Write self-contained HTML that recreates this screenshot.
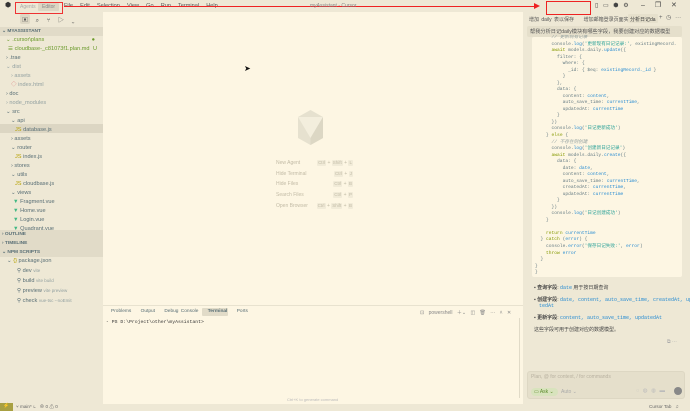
<!DOCTYPE html>
<html><head><meta charset="utf-8">
<style>
*{margin:0;padding:0;box-sizing:border-box}
body{width:690px;height:411px;overflow:hidden;background:#eee8d5;font-family:"Liberation Sans","Noto Sans CJK SC",sans-serif;color:#586e75;position:relative}
.a{position:absolute;white-space:nowrap}
.sb{font-size:5.6px;line-height:9px}
.code{font-family:"Liberation Mono","Noto Sans CJK SC",monospace;font-size:4.6px;line-height:6.53px;color:#657b83;white-space:pre}
.k{color:#859900}.s{color:#2aa198}.f{color:#268bd2}.c{color:#93a1a1;font-style:italic}
.key{display:inline-block;background:#f1ebd8;border-radius:1px;padding:0 1px;font-size:4.5px;line-height:6px}
</style></head><body>
<!-- title bar -->
<div class="a" style="left:0;top:0;width:690px;height:12px;background:#eee8d5"></div>
<div class="a" style="left:5px;top:2px;font-size:7px;line-height:8px;color:#333">⬢</div>
<div class="a" style="left:15px;top:2px;width:48px;height:12px;border:1px solid #e33"></div>
<div class="a" style="left:20px;top:4px;font-size:5px;color:#aaa">Agents</div>
<div class="a" style="left:38px;top:3px;width:21px;height:8px;background:#dcd6c3;border-radius:1px"></div>
<div class="a" style="left:42px;top:4px;font-size:5px;color:#888">Editor</div>
<div class="a" style="left:64px;top:3px;font-size:5.6px;color:#555;word-spacing:2px">File&nbsp; Edit&nbsp; Selection&nbsp; View&nbsp; Go&nbsp; Run&nbsp; Terminal&nbsp; Help</div>
<div class="a" style="left:64px;top:6px;width:472px;height:1px;background:#e22"></div>
<div class="a" style="left:534px;top:3px;border-left:6px solid #e22;border-top:3px solid transparent;border-bottom:3px solid transparent"></div>
<div class="a" style="left:546px;top:1px;width:45px;height:14px;border:1px solid #e22"></div>
<div class="a" style="left:310px;top:3px;font-size:5px;color:#888">myAssistant - Cursor</div>
<div class="a" style="left:595px;top:2px;font-size:6px;color:#444;word-spacing:3px">▯ ▭ ⬢ ⚙</div>
<div class="a" style="left:641px;top:1px;font-size:7px;color:#444;word-spacing:8px">– ❐ ✕</div>
<!-- sidebar -->
<div class="a" style="left:20px;top:14px;width:10px;height:10px;background:#ddd7c4;border-radius:2px"></div>
<div class="a" style="left:22px;top:15px;font-size:6px;color:#555;word-spacing:6px">▣ ⌕ ⑂ ▷ ⌄</div>
<div class="a" style="left:0;top:27px;width:103px;height:9px;background:#e1dbc8"></div>
<div class="a sb" style="left:2px;top:27px;font-weight:bold;font-size:4.8px">⌄ MYASSISTANT</div>
<div class="a" style="left:0;top:124px;width:103px;height:9px;background:#dcd6c3"></div>
<div class="a" style="left:0;top:230px;width:103px;height:27px;background:#e1dbc8"></div>
<div class="a sb" style="left:0;top:36px;width:103px">
<div style="padding-left:6px;color:#6a9a2a">⌄ .cursor\plans<span style="float:right;padding-right:8px">●</span></div>
<div style="padding-left:8px;color:#6a9a2a">☰ cloudbase-_c81073f1.plan.md<span style="float:right;padding-right:6px">U</span></div>
<div style="padding-left:6px">› .trae</div>
<div style="padding-left:6px;color:#93a1a1">⌄ dist</div>
<div style="padding-left:11px;color:#93a1a1">› assets</div>
<div style="padding-left:11px;color:#93a1a1"><span style="color:#d88">◇</span> index.html</div>
<div style="padding-left:6px">› doc</div>
<div style="padding-left:6px;color:#93a1a1">› node_modules</div>
<div style="padding-left:6px">⌄ src</div>
<div style="padding-left:11px">⌄ api</div>
<div style="padding-left:15px"><span style="color:#b5a000">JS</span> database.js</div>
<div style="padding-left:11px">› assets</div>
<div style="padding-left:11px">⌄ router</div>
<div style="padding-left:15px"><span style="color:#b5a000">JS</span> index.js</div>
<div style="padding-left:11px">› stores</div>
<div style="padding-left:11px">⌄ utils</div>
<div style="padding-left:15px"><span style="color:#b5a000">JS</span> cloudbase.js</div>
<div style="padding-left:11px">⌄ views</div>
<div style="padding-left:13px"><span style="color:#41b883">▼</span> Fragment.vue</div>
<div style="padding-left:13px"><span style="color:#41b883">▼</span> Home.vue</div>
<div style="padding-left:13px"><span style="color:#41b883">▼</span> Login.vue</div>
<div style="padding-left:13px"><span style="color:#41b883">▼</span> Quadrant.vue</div>
</div>
<div class="a sb" style="left:2px;top:230px;font-weight:bold;font-size:4.8px;line-height:9px">› OUTLINE<br>› TIMELINE<br>⌄ NPM SCRIPTS</div>
<div class="a sb" style="left:0;top:257px">
<div style="padding-left:7px">⌄ <span style="color:#b5a000">{}</span> package.json</div>
<div style="padding-left:17px">⚲ dev <span style="font-size:4.5px;color:#93a1a1">vite</span></div>
<div style="padding-left:17px">⚲ build <span style="font-size:4.5px;color:#93a1a1">vite build</span></div>
<div style="padding-left:17px">⚲ preview <span style="font-size:4.5px;color:#93a1a1">vite preview</span></div>
<div style="padding-left:17px">⚲ check <span style="font-size:4.5px;color:#93a1a1">vue-tsc --noEmit</span></div>
</div>
<!-- editor -->
<div class="a" style="left:103px;top:12px;width:420px;height:392px;background:#fdf6e3"></div>
<svg class="a" style="left:297px;top:109px" width="27" height="37" viewBox="0 0 27 37"><polygon points="13.5,1 26,8 26,29 13.5,36 1,29 1,8" fill="#e6e1cf"/><polygon points="1,8 26,8 13.5,29" fill="#f3eedd"/><polygon points="26,8 13.5,29 13.5,36 26,29" fill="#dcd7c4"/></svg>
<div class="a" style="left:276px;top:158px;font-size:5px;line-height:10.7px;color:#c2bba6">New Agent<br>Hide Terminal<br>Hide Files<br>Search Files<br>Open Browser</div>
<div class="a" style="left:290px;top:158px;width:63px;font-size:5px;line-height:10.7px;color:#c2bba6;text-align:right">
<span class="key">Ctrl</span> + <span class="key">Shift</span> + <span class="key">L</span><br><span class="key">Ctrl</span> + <span class="key">J</span><br><span class="key">Ctrl</span> + <span class="key">B</span><br><span class="key">Ctrl</span> + <span class="key">P</span><br><span class="key">Ctrl</span> + <span class="key">Shift</span> + <span class="key">B</span></div>
<div class="a" style="left:244px;top:64px;font-size:8px;color:#111">➤</div>
<!-- terminal -->
<div class="a" style="left:103px;top:305px;width:420px;height:1px;background:#e8e2cf"></div>
<div class="a" style="left:202px;top:308px;width:26px;height:8px;background:#e1dbc8;border-radius:1px"></div>
<div class="a" style="left:111px;top:309px;font-size:4.8px;color:#586e75;word-spacing:1px">Problems&nbsp;&nbsp;&nbsp; Output&nbsp;&nbsp;&nbsp; Debug Console&nbsp;&nbsp;&nbsp; <b>Terminal</b>&nbsp;&nbsp;&nbsp; Ports</div>
<div class="a" style="left:420px;top:309px;font-size:5px;color:#888;word-spacing:3px">⊡ powershell ＋⌄ ◫ 🗑 ··· ˄ ✕</div>
<div class="a" style="left:106px;top:320px;font-family:'Liberation Mono',monospace;font-size:4.8px;color:#333">◦ PS D:\Project\other\myAssistant&gt;</div>
<div class="a" style="left:519px;top:318px;width:1px;height:80px;background:#e1dbc8"></div>
<div class="a" style="left:287px;top:397px;font-size:4px;color:#bbb">Ctrl+K to generate command</div>
<!-- status -->
<div class="a" style="left:0;top:403px;width:13px;height:8px;background:#a8a042"></div>
<div class="a" style="left:3px;top:403px;font-size:5px;color:#fff">⚡</div>
<div class="a" style="left:16px;top:404px;font-size:4.6px;color:#666">⑂ main* ↻&nbsp;&nbsp; ⊗ 0 ⚠ 0</div>
<div class="a" style="left:649px;top:404px;font-size:4.6px;color:#666">Cursor Tab&nbsp;&nbsp; ♫</div>
<!-- right panel -->
<div class="a" style="left:529px;top:16px;font-size:5px;color:#555;word-spacing:1px">增加 daily 表以保存&nbsp;&nbsp;&nbsp; 增加邮箱登录页面实</div>
<div class="a" style="left:628px;top:14px;width:30px;height:9px;background:#e6e0cc;border-radius:1px"></div>
<div class="a" style="left:630px;top:16px;font-size:5px;color:#333">分析日记da</div>
<div class="a" style="left:659px;top:14px;font-size:6px;color:#666;word-spacing:2px">+ ◷ ···</div>
<div class="a" style="left:527px;top:26px;width:155px;height:11px;background:#e5dfcb;border-radius:2px"></div>
<div class="a" style="left:530px;top:28px;font-size:5.2px;color:#555">帮我分析日记daily模块有哪些字段，我要创建对应的数据模型</div>
<div class="a" style="left:532px;top:37px;width:150px;height:240px;background:#fdf6e3;border-radius:2px"></div>
<div class="a code" style="left:535px;top:35px;overflow:hidden;width:146px;height:242px"><span class="c">      // 更新现有记录</span>
      console.<span class="f">log</span>(<span class="s">'更新现有日记记录:'</span>, existingRecord.
      <span class="k">await</span> models.daily.<span class="f">update</span>({
        filter: {
          where: {
            _id: { $eq: <span class="f">existingRecord._id</span> }
          }
        },
        data: {
          content: <span class="f">content</span>,
          auto_save_time: <span class="f">currentTime</span>,
          updatedAt: <span class="f">currentTime</span>
        }
      })
      console.<span class="f">log</span>(<span class="s">'日记更新成功'</span>)
    } <span class="k">else</span> {
<span class="c">      // 不存在则创建</span>
      console.<span class="f">log</span>(<span class="s">'创建新日记记录'</span>)
      <span class="k">await</span> models.daily.<span class="f">create</span>({
        data: {
          date: <span class="f">date</span>,
          content: <span class="f">content</span>,
          auto_save_time: <span class="f">currentTime</span>,
          createdAt: <span class="f">currentTime</span>,
          updatedAt: <span class="f">currentTime</span>
        }
      })
      console.<span class="f">log</span>(<span class="s">'日记创建成功'</span>)
    }

    <span class="k">return</span> <span class="f">currentTime</span>
  } <span class="k">catch</span> (<span class="f">error</span>) {
    console.<span class="f">error</span>(<span class="s">'保存日记失败:'</span>, <span class="f">error</span>)
    <span class="k">throw</span> <span class="f">error</span>
  }
}
}</div>
<div class="a" style="left:534px;top:285px;font-size:5px;line-height:6px;color:#444">
<div>▪ <b>查询字段</b>: <span class="f" style="font-family:'Liberation Mono',monospace">date</span> 用于按日期查询</div>
<div style="margin-top:6px">▪ <b>创建字段</b>: <span class="f" style="font-family:'Liberation Mono',monospace">date, content, auto_save_time, createdAt, upda</span></div>
<div style="padding-left:5px" class="f"><span style="font-family:'Liberation Mono',monospace">tedAt</span></div>
<div style="margin-top:6px">▪ <b>更新字段</b>: <span class="f" style="font-family:'Liberation Mono',monospace">content, auto_save_time, updatedAt</span></div>
<div style="margin-top:6px">这些字段可用于创建对应的数据模型。</div>
</div>
<div class="a" style="left:667px;top:339px;font-size:5px;color:#aaa">⧉ ···</div>
<div class="a" style="left:527px;top:371px;width:158px;height:28px;background:#e5dfcb;border-radius:3px;border:1px solid #ddd7c3"></div>
<div class="a" style="left:531px;top:374px;font-size:5px;color:#b8b1a0">Plan, @ for context, / for commands</div>
<div class="a" style="left:531px;top:388px;width:27px;height:8px;background:#d8e3bd;border-radius:4px"></div>
<div class="a" style="left:534px;top:389px;font-size:5px;color:#5a8a2a">▭ Ask ⌄</div>
<div class="a" style="left:561px;top:389px;font-size:5px;color:#aaa">Auto ⌄</div>
<div class="a" style="left:636px;top:388px;font-size:5.5px;color:#bbb;word-spacing:2px">◌ ◍ ◍ ▬</div>
<div class="a" style="left:674px;top:387px;width:8px;height:8px;background:#888;border-radius:50%"></div>
</body></html>
